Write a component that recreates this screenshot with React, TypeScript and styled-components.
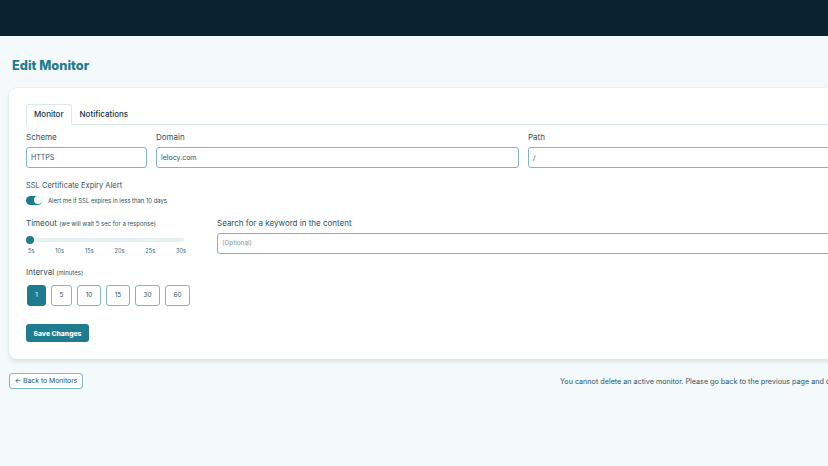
import React from 'react';
import styled, { createGlobalStyle } from 'styled-components';

const GlobalStyle = createGlobalStyle`
  html, body {
    margin: 0;
    padding: 0;
    height: 100%;
    overflow: hidden;
    background: #f4fafb;
    font-family: 'Inter', 'Liberation Sans', sans-serif;
    color: #2a5362;
  }
  * { box-sizing: border-box; }
`;

const Page = styled.div`
  width: 1240px;
  height: 466px;
  overflow: hidden;
`;

const TopBar = styled.header`
  height: 36px;
  background: #0b2230;
`;

const Main = styled.main`
  padding: 21px 0 0 9px;
`;

const Title = styled.h1`
  margin: 0 0 14px 3px;
  height: 17px;
  font-size: 12.8px;
  line-height: 17px;
  font-weight: 800;
  color: #1f7c8f;
`;

const Card = styled.section`
  height: 271px;
  padding: 16px 17px;
  background-color: #fff;
  background-image: radial-gradient(#eef5f6 0.6px, transparent 0.7px);
  background-size: 6px 6px;
  border-radius: 8px;
  outline: 1px dotted #dfeaec;
  box-shadow: 0 3px 4px rgba(40, 80, 95, 0.13);
`;

const Tabs = styled.div`
  display: flex;
  height: 21px;
  border-bottom: 1px solid #d9e9ec;
`;

const Tab = styled.div<{ $active?: boolean }>`
  height: 21px;
  padding: 0 7px;
  font-size: 8px;
  line-height: 19px;
  font-weight: 500;
  color: #123546;
  background: ${(p) => (p.$active ? '#fff' : 'transparent')};
  border: 1px solid ${(p) => (p.$active ? '#d9e9ec' : 'transparent')};
  border-bottom-color: ${(p) => (p.$active ? '#fff' : 'transparent')};
  border-radius: 3px 3px 0 0;
`;

const UrlRow = styled.div`
  display: grid;
  grid-template-columns: 121px 363px 1fr;
  gap: 9px;
  margin-top: 7px;
`;

const Field = styled.div`
  display: flex;
  flex-direction: column;
  min-width: 0;
`;

const Label = styled.label<{ $small?: boolean }>`
  display: block;
  height: 15px;
  font-size: ${(p) => (p.$small ? '7.5px' : '8px')};
  line-height: 11px;
  color: #2a5362;
`;

const Hint = styled.small`
  font-size: 6px;
  color: #2a5362;
`;

const Input = styled.div<{ $placeholder?: boolean }>`
  height: 21px;
  padding: 0 4px;
  background: #fff;
  border: 1px solid #7fb6c1;
  border-radius: 3px;
  font-size: ${(p) => (p.$placeholder ? '6.4px' : '7px')};
  line-height: 19px;
  color: ${(p) => (p.$placeholder ? '#7c9ba4' : '#2a5362')};
`;

const SslBlock = styled.div`
  margin-top: 12px;
`;

const ToggleRow = styled.div`
  display: flex;
  align-items: center;
  gap: 6px;
  height: 10px;
  font-size: 5.9px;
  color: #2a5362;
`;

const Toggle = styled.span`
  display: flex;
  justify-content: flex-end;
  align-items: center;
  width: 16px;
  height: 9px;
  padding: 0.5px;
  background: #1f7c8f;
  border-radius: 5px;

  &::after {
    content: '';
    width: 8px;
    height: 8px;
    background: #fff;
    border-radius: 50%;
  }
`;

const OptionsRow = styled.div`
  display: grid;
  grid-template-columns: 164px 1fr;
  gap: 27px;
  margin-top: 13px;
`;

const Track = styled.div`
  display: flex;
  align-items: center;
  width: 158px;
  height: 4px;
  margin-top: 5px;
  background: #e8eff1;
  border-radius: 2px;

  &::before {
    content: '';
    width: 8px;
    height: 8px;
    background: #1f7c8f;
    border-radius: 50%;
  }
`;

const Ticks = styled.div`
  display: flex;
  justify-content: space-between;
  width: 158px;
  margin: 5px 0 0 2px;
  font-size: 5.6px;
  line-height: 8px;
  color: #3d6674;
`;

const IntervalBlock = styled.div`
  margin-top: 12px;
`;

const Intervals = styled.div`
  display: flex;
  gap: 5px;
  margin: 2.5px 0 0 1px;
`;

const IntervalButton = styled.button<{ $active?: boolean; $width: number }>`
  width: ${(p) => p.$width}px;
  height: 21px;
  padding: 0;
  font-family: inherit;
  font-size: 6.4px;
  color: ${(p) => (p.$active ? '#fff' : '#2a5362')};
  background: ${(p) => (p.$active ? '#1f7c8f' : '#fff')};
  border: 1px solid ${(p) => (p.$active ? '#1f7c8f' : '#7fb6c1')};
  border-radius: 3px;
`;

const SaveButton = styled.button`
  display: block;
  width: 63px;
  height: 18px;
  margin-top: 18.5px;
  padding: 0;
  font-family: inherit;
  font-size: 6.8px;
  font-weight: 800;
  color: #fff;
  background: #1f7c8f;
  border: none;
  border-radius: 3px;
`;

const Footer = styled.div`
  display: flex;
  align-items: center;
  margin-top: 14px;
`;

const BackLink = styled.a`
  width: 74px;
  height: 16px;
  font-size: 6.8px;
  line-height: 14px;
  text-align: center;
  white-space: nowrap;
  color: #2a5362;
  background: #fff;
  border: 1px solid #7fb6c1;
  border-radius: 3px;
`;

const DeleteNote = styled.p`
  margin: 0 0 0 477px;
  font-size: 7.2px;
  white-space: nowrap;
  color: #2a5362;
`;

const ticks = ['5s', '10s', '15s', '20s', '25s', '30s'];
const intervals = [
  { value: 1, width: 19 },
  { value: 5, width: 21 },
  { value: 10, width: 24 },
  { value: 15, width: 24 },
  { value: 30, width: 25 },
  { value: 60, width: 25 },
];

export default function App() {
  return (
    <Page>
      <GlobalStyle />
      <TopBar />
      <Main>
        <Title>Edit Monitor</Title>
        <Card>
          <Tabs>
            <Tab $active>Monitor</Tab>
            <Tab>Notifications</Tab>
          </Tabs>
          <UrlRow>
            <Field>
              <Label>Scheme</Label>
              <Input>HTTPS</Input>
            </Field>
            <Field>
              <Label>Domain</Label>
              <Input>lelocy.com</Input>
            </Field>
            <Field>
              <Label>Path</Label>
              <Input>/</Input>
            </Field>
          </UrlRow>
          <SslBlock>
            <Label $small>SSL Certificate Expiry Alert</Label>
            <ToggleRow>
              <Toggle />
              Alert me if SSL expires in less than 10 days
            </ToggleRow>
          </SslBlock>
          <OptionsRow>
            <Field>
              <Label>
                Timeout <Hint>(we will wait 5 sec for a response)</Hint>
              </Label>
              <Track />
              <Ticks>
                {ticks.map((t) => (
                  <span key={t}>{t}</span>
                ))}
              </Ticks>
            </Field>
            <Field>
              <Label>Search for a keyword in the content</Label>
              <Input $placeholder>(Optional)</Input>
            </Field>
          </OptionsRow>
          <IntervalBlock>
            <Label>
              Interval <Hint>(minutes)</Hint>
            </Label>
            <Intervals>
              {intervals.map((n) => (
                <IntervalButton key={n.value} $active={n.value === 1} $width={n.width}>
                  {n.value}
                </IntervalButton>
              ))}
            </Intervals>
          </IntervalBlock>
          <SaveButton>Save Changes</SaveButton>
        </Card>
        <Footer>
          <BackLink>← Back to Monitors</BackLink>
          <DeleteNote>
            You cannot delete an active monitor. Please go back to the previous page and disable it first.
          </DeleteNote>
        </Footer>
      </Main>
    </Page>
  );
}
